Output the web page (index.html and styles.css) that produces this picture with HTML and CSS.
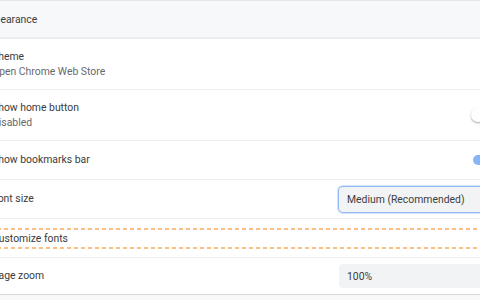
FILE: index.html
```html
<!DOCTYPE html>
<html lang="en">

<head>
    <meta charset="UTF-8">
    <meta name="viewport" content="width=device-width, initial-scale=1.0">
    <title>Settings - Appearance</title>
    <link rel="stylesheet" href="styles.css">
</head>

<body>

    <div class="page">
        <div class="section-title">Appearance</div>

        <div class="card">
            <div class="row row-tall">
                <div class="label">
                    <div>Theme</div>
                    <div class="sub">Open Chrome Web Store</div>
                </div>
            </div>

            <div class="row row-tall">
                <div class="label">
                    <div>Show home button</div>
                    <div class="sub">Disabled</div>
                </div>
                <div class="toggle">
                    <span class="bar"></span>
                    <span class="knob"></span>
                </div>
            </div>

            <div class="row">
                <div class="label">Show bookmarks bar</div>
                <div class="toggle on">
                    <span class="bar"></span>
                    <span class="knob"></span>
                </div>
            </div>

            <div class="row">
                <div class="label">Font size</div>
                <div class="select focused">Medium (Recommended)</div>
            </div>

            <div class="row row-link">
                <div class="highlight">Customize fonts</div>
            </div>

            <div class="row row-last">
                <div class="label">Page zoom</div>
                <div class="select">100%</div>
            </div>
        </div>
    </div>

</body>

</html>
```

FILE: styles.css
```css
/* Settings page, scaled to 80% */
body {
    margin: 0;
    background-color: #f7f8fa;
    font-family: Roboto, "Liberation Sans", sans-serif;
    font-size: 10.4px;
    color: #3a3b3d;
    overflow: hidden;
}

.page {
    margin-left: -24px;
    width: 540px;
}

.section-title {
    height: 36px;
    border-top: 1px solid #e3e5e8;
    padding-left: 6px;
    display: flex;
    align-items: center;
    color: #3c3c3c;
}

.card {
    background-color: #fff;
    border-top: 2px solid #ececec;
    border-bottom: 1px solid #d9d9d9;
    box-shadow: 0 2px 2px rgba(0, 0, 0, 0.12);
}

.row {
    height: 38px;
    padding: 0 17px 0 16px;
    display: flex;
    align-items: center;
    border-top: 1px solid #efefef;
}

.row:first-child {
    border-top: none;
}

.row-tall {
    height: 50px;
}

.row-last {
    height: 36px;
}

.label {
    line-height: 15.5px;
}

.sub {
    color: #66696d;
}

.row-link {
    padding-left: 0;
}

.highlight {
    flex: 1;
    height: 21px;
    margin-top: 1px;
    padding-left: 16px;
    display: flex;
    align-items: center;
    background-image:
        repeating-linear-gradient(90deg, #f9bf85 0 4px, transparent 4px 7px),
        repeating-linear-gradient(90deg, #f9bf85 0 4px, transparent 4px 7px);
    background-size: 100% 2px, 100% 2px;
    background-position: 0 0, 0 100%;
    background-repeat: no-repeat;
}

.select {
    margin-left: auto;
    width: 152px;
    height: 24px;
    padding-left: 8px;
    display: flex;
    align-items: center;
    background-color: #f1f3f4;
    border-radius: 4px;
    color: #3c4043;
}

.select.focused {
    height: 25px;
    box-shadow: 0 0 0 1px #8fb8f6, 0 0 0 2px #d6e5fc;
}

.toggle {
    margin-left: auto;
    position: relative;
    width: 28px;
    height: 14px;
}

.toggle .bar {
    position: absolute;
    left: 2px;
    top: 2px;
    width: 24px;
    height: 10px;
    border-radius: 5px;
    background-color: #bdc1c6;
}

.toggle .knob {
    position: absolute;
    left: 0;
    top: 0;
    width: 14px;
    height: 14px;
    border-radius: 50%;
    background-color: #fff;
    box-shadow: 0 1px 2px rgba(0, 0, 0, 0.35);
}

.toggle.on .bar {
    background-color: #8ab4f8;
}

.toggle.on .knob {
    left: 14px;
    background-color: #1a73e8;
}
```
